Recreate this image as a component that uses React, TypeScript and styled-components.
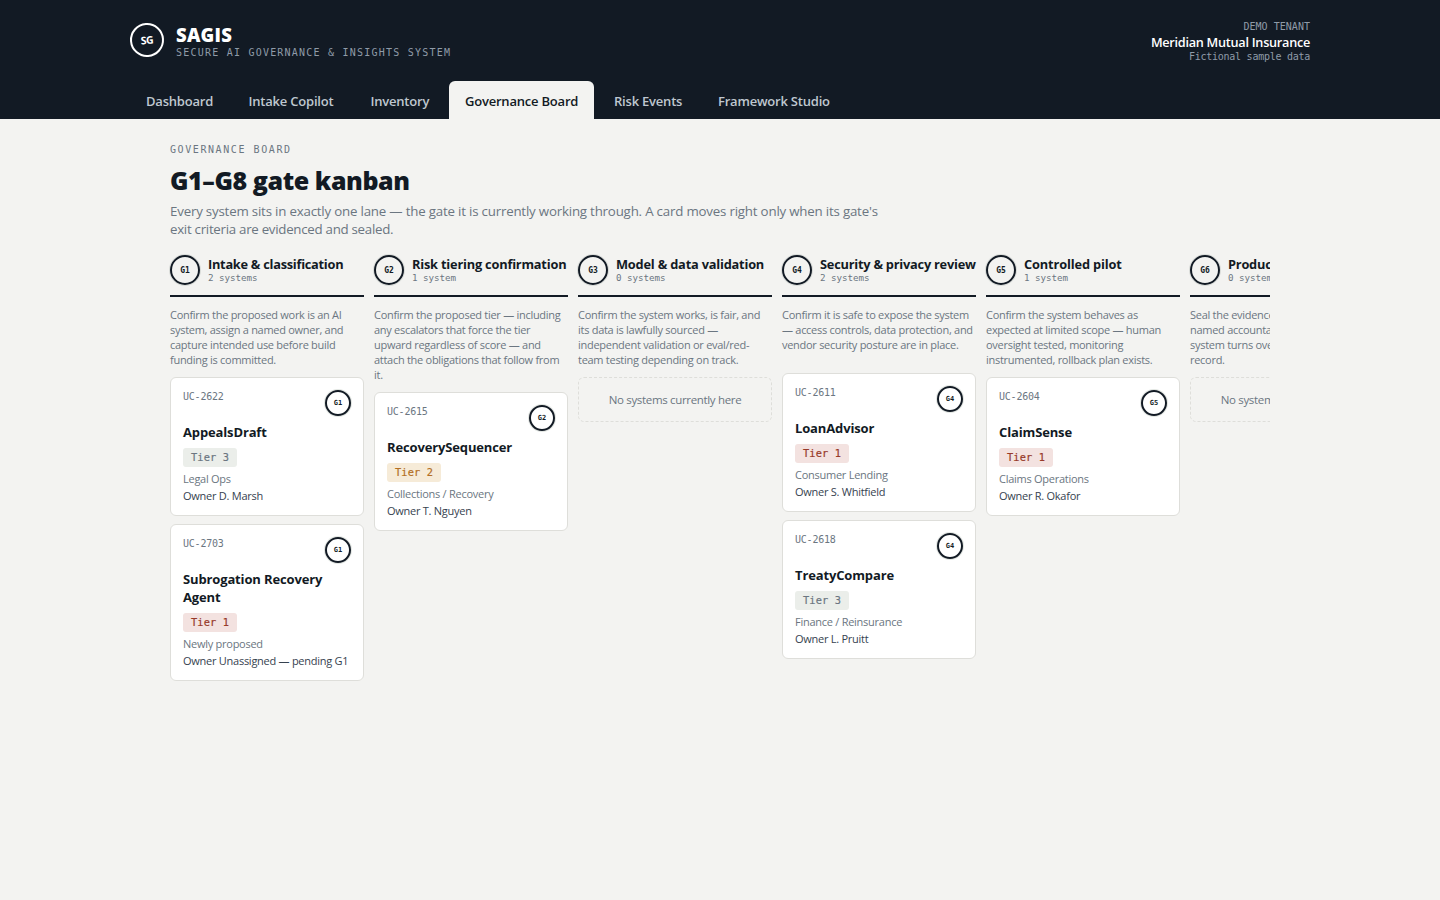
import React from "react";
import styled, { createGlobalStyle, css } from "styled-components";

const INK = "#121a24";
const PAPER = "#f3f3f1";
const MUTED = "#6b7681";
const LINE = "#dededa";
const SANS = `"Open Sans", "Noto Sans", sans-serif`;
const MONO = `"DejaVu Sans Mono", "Liberation Mono", monospace`;

const GlobalStyle = createGlobalStyle`
  *, *::before, *::after { box-sizing: border-box; }
  html, body { margin: 0; min-height: 100%; background: ${PAPER}; }
  body { font-family: ${SANS}; color: ${INK}; overflow: hidden; }
  h1, h2, h3, p { margin: 0; }
`;

const Header = styled.header`
  height: 119px;
  background: ${INK};
`;

const HeaderInner = styled.div`
  width: 1180px;
  height: 100%;
  margin: 0 auto;
  display: flex;
  flex-direction: column;
  justify-content: space-between;
`;

const TopRow = styled.div`
  display: flex;
  justify-content: space-between;
  padding-top: 20px;
`;

const Brand = styled.div`
  display: flex;
  gap: 12px;
  padding-top: 3px;
`;

const BrandMark = styled.div`
  width: 34px;
  height: 34px;
  border: 2px solid #fff;
  border-radius: 50%;
  display: flex;
  align-items: center;
  justify-content: center;
  color: #fff;
  font: 700 10.5px/1 ${SANS};
  letter-spacing: -0.3px;
  transform: rotate(-4deg);
`;

const BrandName = styled.div`
  margin-top: 1px;
  font-size: 18.5px;
  font-weight: 800;
  line-height: 21px;
  letter-spacing: 0.25px;
  color: #fff;
`;

const BrandTagline = styled.div`
  font: 400 10px/15px ${MONO};
  letter-spacing: 1.22px;
  color: #8f9ba8;
`;

const Tenant = styled.div`
  display: flex;
  flex-direction: column;
  align-items: flex-end;
`;

const TenantLabel = styled.div`
  font: 400 10px/14px ${MONO};
  letter-spacing: 0.03px;
  color: #8f9ba8;
`;

const TenantName = styled.div`
  font-size: 12.7px;
  font-weight: 650;
  line-height: 16px;
  letter-spacing: -0.27px;
  color: #fff;
`;

const TenantNote = styled.div`
  font: 400 10px/13px ${MONO};
  letter-spacing: -0.26px;
  color: #8f9ba8;
`;

const Tabs = styled.nav`
  display: flex;
  gap: 4px;
`;

const Tab = styled.a<{ $active?: boolean; $width: number }>`
  width: ${(p) => p.$width}px;
  height: 38px;
  border-radius: 6px 6px 0 0;
  padding: 0 0 0 16px;
  font-size: 13px;
  font-weight: 600;
  line-height: 40px;
  letter-spacing: -0.21px;
  white-space: nowrap;
  color: #bfc7cf;
  ${(p) =>
    p.$active &&
    css`
      background: ${PAPER};
      color: ${INK};
    `}
`;

const Main = styled.main`
  width: 1100px;
  margin: 0 auto;
  padding-top: 24px;
`;

const Eyebrow = styled.div`
  font: 400 10px/14px ${MONO};
  letter-spacing: 1.58px;
  color: ${MUTED};
`;

const Title = styled.h1`
  margin-top: 6px;
  font-size: 25px;
  font-weight: 800;
  line-height: 34px;
  letter-spacing: -0.42px;
`;

const Lead = styled.p`
  width: 720px;
  margin-top: 5px;
  font-size: 13.3px;
  line-height: 18px;
  letter-spacing: -0.197px;
  color: ${MUTED};

  & > span {
    display: block;
    letter-spacing: -0.28px;
  }
`;

const Board = styled.section`
  display: flex;
  gap: 10px;
  margin: 13px 0 0 -4px;
  padding: 4px 0 0 4px;
  overflow: hidden;
`;

const LaneColumn = styled.div`
  flex: 0 0 194px;
  display: flex;
  flex-direction: column;
`;

const LaneHead = styled.div`
  display: flex;
  gap: 8px;
  height: 42px;
  border-bottom: 2px solid ${INK};
`;

const Seal = styled.div<{ $small?: boolean }>`
  flex: none;
  width: ${(p) => (p.$small ? 26 : 30)}px;
  height: ${(p) => (p.$small ? 26 : 30)}px;
  border: 2px solid ${INK};
  border-radius: 50%;
  box-shadow: 0 0 0 1px ${(p) => (p.$small ? "#e2e6e2" : "#d8dbd8")};
  display: flex;
  align-items: center;
  justify-content: center;
  padding-top: 1px;
  font: 700 ${(p) => (p.$small ? 7 : 8)}px/1 ${MONO};
`;

const LaneTitle = styled.h2<{ $tracking: number }>`
  margin-top: 1px;
  font-size: 12.8px;
  font-weight: 750;
  line-height: 17px;
  letter-spacing: ${(p) => p.$tracking}px;
  white-space: nowrap;
`;

const LaneCount = styled.div`
  font: 400 9.2px/10px ${MONO};
  letter-spacing: -0.04px;
  color: ${MUTED};
`;

const LaneNote = styled.p`
  min-height: 56px;
  margin: 10px 0;
  font-size: 11px;
  line-height: 15px;
  letter-spacing: -0.28px;
  color: ${MUTED};
`;

const CardStack = styled.div`
  display: flex;
  flex-direction: column;
  gap: 8px;
`;

const Card = styled.article`
  padding: 12px 12px 11px;
  background: #fff;
  border: 1px solid ${LINE};
  border-radius: 6px;
`;

const CardTop = styled.div`
  display: flex;
  justify-content: space-between;
`;

const CaseId = styled.span`
  font: 400 10px/14px ${MONO};
  letter-spacing: -0.22px;
  color: ${MUTED};
`;

const CardTitle = styled.h3`
  margin-top: 7px;
  font-size: 13px;
  font-weight: 700;
  line-height: 18px;
  letter-spacing: -0.14px;
`;

const tiers = {
  1: { background: "#f3e2e0", color: "#983a2a" },
  2: { background: "#f6ebd8", color: "#b36f24" },
  3: { background: "#ebeeea", color: "#6b7681" },
};

const TierPill = styled.div<{ $tier: 1 | 2 | 3 }>`
  width: 54px;
  height: 19px;
  margin: 7px 0 3px;
  padding-left: 8px;
  border-radius: 3px;
  font: 400 10.3px/19px ${MONO};
  -webkit-text-stroke: 0.2px currentColor;
  letter-spacing: 0.14px;
  white-space: nowrap;
  background: ${(p) => tiers[p.$tier].background};
  color: ${(p) => tiers[p.$tier].color};
`;

const CardLine = styled.div<{ $strong?: boolean }>`
  font-size: 11px;
  line-height: 17px;
  letter-spacing: -0.26px;
  white-space: nowrap;
  color: ${(p) => (p.$strong ? "#36424f" : MUTED)};
`;

const EmptyLane = styled.div`
  height: 45px;
  border: 1px dashed ${LINE};
  border-radius: 6px;
  font-size: 11.5px;
  line-height: 44px;
  letter-spacing: -0.33px;
  text-align: center;
  color: ${MUTED};
`;

const TABS = [
  { label: "Dashboard", width: 98.5 },
  { label: "Intake Copilot", width: 118 },
  { label: "Inventory", width: 90.5 },
  { label: "Governance Board", width: 145, active: true },
  { label: "Risk Events", width: 100 },
  { label: "Framework Studio", width: 144 },
];

type System = { id: string; name: string; tier: 1 | 2 | 3; unit: string; owner: string };
type Lane = { gate: string; title: string; tracking: number; note: string; systems: System[] };

const LANES: Lane[] = [
  {
    gate: "G1",
    title: "Intake & classification",
    tracking: -0.27,
    note: "Confirm the proposed work is an AI system, assign a named owner, and capture intended use before build funding is committed.",
    systems: [
      { id: "UC-2622", name: "AppealsDraft", tier: 3, unit: "Legal Ops", owner: "D. Marsh" },
      { id: "UC-2703", name: "Subrogation Recovery Agent", tier: 1, unit: "Newly proposed", owner: "Unassigned — pending G1" },
    ],
  },
  {
    gate: "G2",
    title: "Risk tiering confirmation",
    tracking: -0.2,
    note: "Confirm the proposed tier — including any escalators that force the tier upward regardless of score — and attach the obligations that follow from it.",
    systems: [{ id: "UC-2615", name: "RecoverySequencer", tier: 2, unit: "Collections / Recovery", owner: "T. Nguyen" }],
  },
  {
    gate: "G3",
    title: "Model & data validation",
    tracking: -0.2,
    note: "Confirm the system works, is fair, and its data is lawfully sourced — independent validation or eval/red-team testing depending on track.",
    systems: [],
  },
  {
    gate: "G4",
    title: "Security & privacy review",
    tracking: -0.23,
    note: "Confirm it is safe to expose the system — access controls, data protection, and vendor security posture are in place.",
    systems: [
      { id: "UC-2611", name: "LoanAdvisor", tier: 1, unit: "Consumer Lending", owner: "S. Whitfield" },
      { id: "UC-2618", name: "TreatyCompare", tier: 3, unit: "Finance / Reinsurance", owner: "L. Pruitt" },
    ],
  },
  {
    gate: "G5",
    title: "Controlled pilot",
    tracking: -0.14,
    note: "Confirm the system behaves as expected at limited scope — human oversight tested, monitoring instrumented, rollback plan exists.",
    systems: [{ id: "UC-2604", name: "ClaimSense", tier: 1, unit: "Claims Operations", owner: "R. Okafor" }],
  },
  {
    gate: "G6",
    title: "Production approval",
    tracking: -0.22,
    note: "Seal the evidence package with a named accountable approver as the system turns over to the operational record.",
    systems: [],
  },
];

function SystemCard({ system, gate }: { system: System; gate: string }) {
  return (
    <Card>
      <CardTop>
        <CaseId>{system.id}</CaseId>
        <Seal $small>{gate}</Seal>
      </CardTop>
      <CardTitle>{system.name}</CardTitle>
      <TierPill $tier={system.tier}>Tier {system.tier}</TierPill>
      <CardLine>{system.unit}</CardLine>
      <CardLine $strong>Owner {system.owner}</CardLine>
    </Card>
  );
}

export default function App() {
  return (
    <>
      <GlobalStyle />
      <Header>
        <HeaderInner>
          <TopRow>
            <Brand>
              <BrandMark>SG</BrandMark>
              <div>
                <BrandName>SAGIS</BrandName>
                <BrandTagline>SECURE AI GOVERNANCE &amp; INSIGHTS SYSTEM</BrandTagline>
              </div>
            </Brand>
            <Tenant>
              <TenantLabel>DEMO TENANT</TenantLabel>
              <TenantName>Meridian Mutual Insurance</TenantName>
              <TenantNote>Fictional sample data</TenantNote>
            </Tenant>
          </TopRow>
          <Tabs>
            {TABS.map((tab) => (
              <Tab key={tab.label} $active={tab.active} $width={tab.width}>
                {tab.label}
              </Tab>
            ))}
          </Tabs>
        </HeaderInner>
      </Header>
      <Main>
        <Eyebrow>GOVERNANCE BOARD</Eyebrow>
        <Title>G1–G8 gate kanban</Title>
        <Lead>
          Every system sits in exactly one lane — the gate it is currently working through. A card moves right only when
          its gate's <span>exit criteria are evidenced and sealed.</span>
        </Lead>
        <Board>
          {LANES.map((lane) => (
            <LaneColumn key={lane.gate}>
              <LaneHead>
                <Seal>{lane.gate}</Seal>
                <div>
                  <LaneTitle $tracking={lane.tracking}>{lane.title}</LaneTitle>
                  <LaneCount>
                    {lane.systems.length} {lane.systems.length === 1 ? "system" : "systems"}
                  </LaneCount>
                </div>
              </LaneHead>
              <LaneNote>{lane.note}</LaneNote>
              <CardStack>
                {lane.systems.length === 0 && <EmptyLane>No systems currently here</EmptyLane>}
                {lane.systems.map((system) => (
                  <SystemCard key={system.id} system={system} gate={lane.gate} />
                ))}
              </CardStack>
            </LaneColumn>
          ))}
        </Board>
      </Main>
    </>
  );
}
